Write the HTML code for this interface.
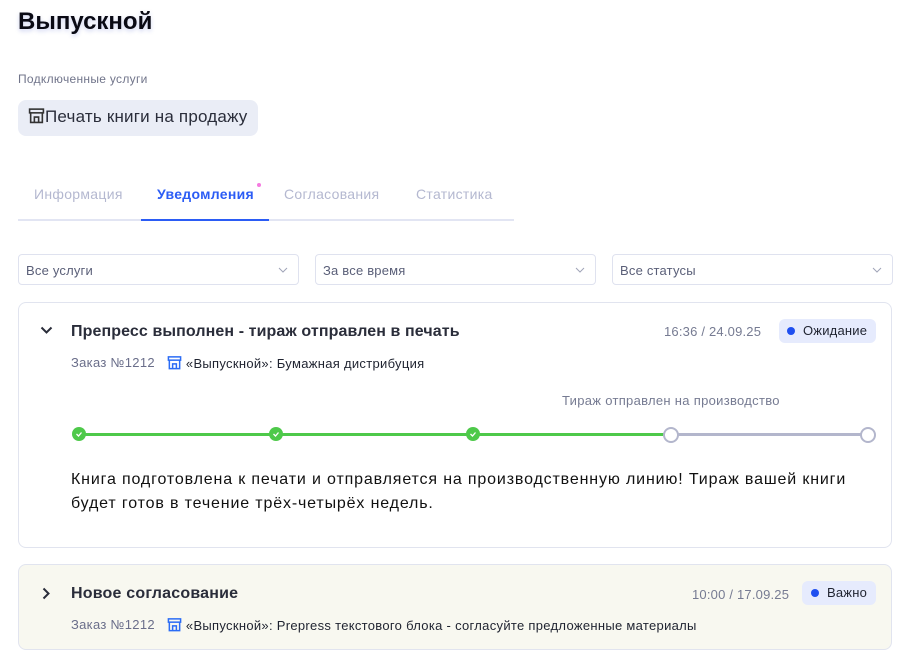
<!DOCTYPE html><html><head><meta charset="utf-8"><style>
body{margin:0;width:907px;height:656px;background:#fff;font-family:"Liberation Sans",sans-serif;position:relative;overflow:hidden;color:#1f2330}
.a{position:absolute;white-space:nowrap}
.sel{position:absolute;top:254px;height:31px;width:281px;border:1px solid #dfe2ef;border-radius:4px;box-sizing:border-box;font-size:13px;color:#5a5f78;padding:8px 7px;letter-spacing:.2px}
.sel svg{position:absolute;right:10px;top:12px}
.card{position:absolute;left:18px;width:874px;border:1px solid #e1e4ef;border-radius:8px;box-sizing:border-box}
.dot{position:absolute;width:14px;height:14px;border-radius:50%;top:427px}
.g{background:#4ec94a}
.o{background:#fff;border:2px solid #b3b6cc;box-sizing:border-box}
.ic{display:inline-block;vertical-align:-2px}
.tab{font-size:14px;letter-spacing:.3px}
.meta{font-size:13px;letter-spacing:.3px}
</style></head><body>
<div class="a" style="left:18px;top:8px;font-size:24px;font-weight:bold;color:#0a0a14;text-shadow:0 2px 4px rgba(60,80,200,.25)">Выпускной</div>
<div class="a" style="left:18px;top:72px;font-size:12px;color:#70748a;letter-spacing:.3px">Подключенные услуги</div>
<div class="a" style="left:18px;top:100px;width:240px;height:36px;background:#eaedf6;border-radius:8px"></div>
<div class="a" style="left:28px;top:107px;font-size:17px;color:#2a2d3a;letter-spacing:.2px"><svg class="ic" width="17" height="17" viewBox="0 0 16 16" fill="none" stroke="#333" stroke-width="1.5"><rect x="1.5" y="2" width="13" height="3.5"/><path d="M2.5 5.5v9h11v-9M6 14.5v-5h4v5"/></svg>Печать книги на продажу</div>
<div class="a tab" style="left:34px;top:186px;color:#b4b8d0">Информация</div>
<div class="a tab" style="left:157px;top:186px;color:#2b5cf5;font-weight:bold">Уведомления</div>
<div class="a" style="left:257px;top:183px;width:4px;height:4px;border-radius:50%;background:#f57ae0"></div>
<div class="a tab" style="left:284px;top:186px;color:#b4b8d0">Согласования</div>
<div class="a tab" style="left:416px;top:186px;color:#b4b8d0">Статистика</div>
<div class="a" style="left:18px;top:219px;width:496px;height:2px;background:#e2e5f3"></div>
<div class="a" style="left:141px;top:219px;width:128px;height:2px;background:#2b5cf5"></div>
<div class="sel" style="left:18px">Все услуги<svg width="10" height="6" viewBox="0 0 10 6"><path d="M1 1l4 4 4-4" stroke="#a0a4b8" fill="none"/></svg></div>
<div class="sel" style="left:315px">За все время<svg width="10" height="6" viewBox="0 0 10 6"><path d="M1 1l4 4 4-4" stroke="#a0a4b8" fill="none"/></svg></div>
<div class="sel" style="left:612px">Все статусы<svg width="10" height="6" viewBox="0 0 10 6"><path d="M1 1l4 4 4-4" stroke="#a0a4b8" fill="none"/></svg></div>
<div class="card" style="top:302px;height:246px"></div>
<svg class="a" style="left:40px;top:326px" width="13" height="9" viewBox="0 0 13 9"><path d="M1.5 1.5l5 5 5-5" stroke="#2a2d3a" stroke-width="2" fill="none"/></svg>
<div class="a" style="left:71px;top:323px;font-size:16px;font-weight:bold;color:#2a2d3a;letter-spacing:.1px">Препресс выполнен - тираж отправлен в печать</div>
<div class="a" style="left:664px;top:324px;font-size:13px;color:#767b92;letter-spacing:.2px">16:36 / 24.09.25</div>
<div class="a" style="left:779px;top:319px;width:97px;height:24px;background:#e6ebfd;border-radius:6px"></div>
<div class="a" style="left:787px;top:327px;width:8px;height:8px;border-radius:50%;background:#1f4ff0"></div>
<div class="a" style="left:803px;top:323px;font-size:13px;color:#1f2330;letter-spacing:.2px">Ожидание</div>
<div class="a meta" style="left:71px;top:355px;color:#6a6e8a">Заказ №1212</div>
<div class="a meta" style="left:167px;top:355px;color:#1f2330"><svg class="ic" width="15" height="15" viewBox="0 0 16 16" fill="none" stroke="#2b6cf5" stroke-width="1.6"><rect x="1.5" y="2" width="13" height="3.5"/><path d="M2.5 5.5v9h11v-9M6 14.5v-5h4v5"/></svg> «Выпускной»: Бумажная дистрибуция</div>
<div class="a" style="left:562px;top:393px;font-size:13px;color:#767b92;letter-spacing:.3px">Тираж отправлен на производство</div>
<div class="a" style="left:78px;top:433px;width:593px;height:3px;background:#4ec94a"></div>
<div class="a" style="left:671px;top:433px;width:197px;height:3px;background:#b3b6cc"></div>
<div class="dot g" style="left:72px"></div><div class="dot g" style="left:269px"></div><div class="dot g" style="left:466px"></div>
<div class="dot o" style="left:663px;width:16px;height:16px;top:427px"></div><div class="dot o" style="left:860px;width:16px;height:16px;top:427px"></div>
<svg class="a" style="left:72px;top:427px" width="410" height="14"><g stroke="#fff" stroke-width="1.3" fill="none"><path d="M4.5 7l2 2 3-3.5"/><path d="M201.5 7l2 2 3-3.5"/><path d="M398.5 7l2 2 3-3.5"/></g></svg>
<div class="a" style="left:71px;top:468px;font-size:16px;line-height:24px;color:#111;white-space:normal;width:790px;letter-spacing:.85px">Книга подготовлена к печати и отправляется на производственную линию! Тираж вашей книги будет готов в течение трёх-четырёх недель.</div>
<div class="card" style="top:564px;height:86px;background:#f8f8f0"></div>
<svg class="a" style="left:42px;top:587px" width="9" height="13" viewBox="0 0 9 13"><path d="M1.5 1.5l5 5-5 5" stroke="#2a2d3a" stroke-width="2" fill="none"/></svg>
<div class="a" style="left:71px;top:585px;font-size:16px;font-weight:bold;color:#2a2d3a;letter-spacing:.2px">Новое согласование</div>
<div class="a" style="left:692px;top:587px;font-size:13px;color:#767b92;letter-spacing:.2px">10:00 / 17.09.25</div>
<div class="a" style="left:802px;top:581px;width:74px;height:24px;background:#e6ebfd;border-radius:6px"></div>
<div class="a" style="left:811px;top:589px;width:8px;height:8px;border-radius:50%;background:#1f4ff0"></div>
<div class="a" style="left:827px;top:585px;font-size:13px;color:#1f2330;letter-spacing:.2px">Важно</div>
<div class="a meta" style="left:71px;top:617px;color:#6a6e8a">Заказ №1212</div>
<div class="a meta" style="left:167px;top:617px;color:#1f2330"><svg class="ic" width="15" height="15" viewBox="0 0 16 16" fill="none" stroke="#2b6cf5" stroke-width="1.6"><rect x="1.5" y="2" width="13" height="3.5"/><path d="M2.5 5.5v9h11v-9M6 14.5v-5h4v5"/></svg> «Выпускной»: Prepress текстового блока - согласуйте предложенные материалы</div>
</body></html>
